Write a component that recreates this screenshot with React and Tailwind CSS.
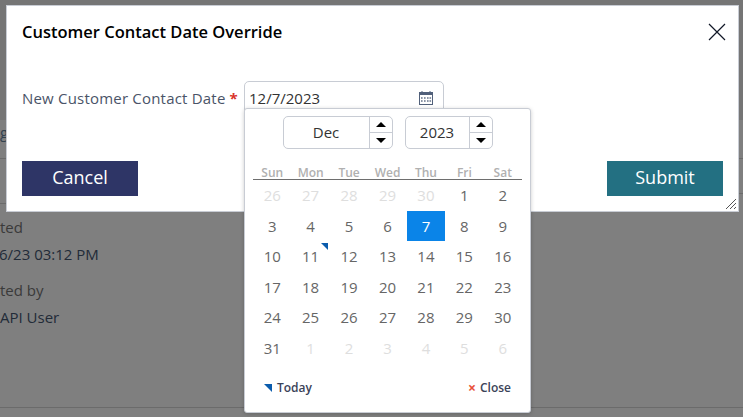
import React from 'react';

const weekDays = ['Sun', 'Mon', 'Tue', 'Wed', 'Thu', 'Fri', 'Sat'];

const dayCells = [
    ...[26, 27, 28, 29, 30].map(n => ({ n, tone: 'out' })),
    ...Array.from({ length: 31 }, (_, i) => ({ n: i + 1, tone: 'in' })),
    ...[1, 2, 3, 4, 5, 6].map(n => ({ n, tone: 'out' })),
];

const Stepper = () => (
    <div className="flex flex-col w-[23px] border-l border-[#c8ccd4]">
        <div className="flex-1 flex items-center justify-center border-b border-[#c8ccd4]">
            <div className="w-0 h-0 border-x-[5px] border-x-transparent border-b-[5px] border-b-black" />
        </div>
        <div className="flex-1 flex items-center justify-center">
            <div className="w-0 h-0 border-x-[5px] border-x-transparent border-t-[5px] border-t-black" />
        </div>
    </div>
);

const CalendarIcon = () => (
    <svg width="16" height="16" viewBox="0 0 16 16" fill="none">
        <rect x="1.5" y="2.5" width="13" height="12" stroke="#51607a" />
        <rect x="1" y="2" width="14" height="3" fill="#51607a" />
        <rect x="3.5" y="1" width="1" height="2" fill="#51607a" />
        <rect x="11.5" y="1" width="1" height="2" fill="#51607a" />
        {[3, 6, 9, 11.5].map(x => <rect key={x} x={x} y="7" width="1.6" height="2" fill="#8b95a6" />)}
        {[3, 6, 9, 11.5].map(x => <rect key={x} x={x} y="10" width="1.6" height="2" fill="#8b95a6" />)}
    </svg>
);

const App = () => {
    return (
        <div className="relative w-[743px] h-[417px] overflow-hidden bg-[#7f7f7f] font-['Open_Sans',sans-serif]">
            {/* Page behind the overlay */}
            <div className="h-[120px] bg-[#757575]" />
            <div className="h-[39px] border-b border-[#6b6b6b] pt-[2px] text-[15px] leading-[20px] text-[#33424f]">g</div>
            <div className="pt-[58px] text-[15px] text-[#3a3a3a]">
                <div className="leading-[20px]">ted</div>
                <div className="leading-[20px] mt-[7px] -ml-[1px] text-[#222b38]">6/23 03:12 PM</div>
                <div className="leading-[20px] mt-[16px]">ted by</div>
                <div className="leading-[20px] mt-[7px] text-[#222b38]">API User</div>
            </div>
            <div className="absolute left-0 w-[6px] top-[203px] h-px bg-[#6b6b6b]" />
            <div className="absolute right-0 w-[4px] top-[193px] h-px bg-[#6b6b6b]" />
            <div className="absolute left-0 right-0 top-[407px] h-px bg-[#6b6b6b]" />

            {/* Modal */}
            <div className="absolute left-[6px] top-[5px] w-[733px] h-[207px] bg-white border border-[#c8ccd4]">
                <div className="flex items-start justify-between pl-[15px] pr-[11px] pt-[14px] h-[62px]">
                    <h1 className="text-[16.5px] leading-[24px] font-semibold text-black">Customer Contact Date Override</h1>
                    <svg width="20" height="20" viewBox="0 0 20 20" className="mt-[2px]">
                        <path d="M2 2 L18 18 M18 2 L2 18" stroke="#111827" strokeWidth="1.2" />
                    </svg>
                </div>
                <div className="flex pl-[15px] h-[93px]">
                    <label className="text-[15px] leading-[60px] tracking-[0.2px] text-[#4a5468] whitespace-nowrap">
                        New Customer Contact Date <span className="text-[#d9342b] font-bold">*</span>
                    </label>
                    <div className="absolute left-[237px] top-[75px] w-[200px] h-[40px] rounded-[5px] border border-[#c8ccd4] flex items-start justify-between pl-[4px] pr-[9px] pt-[4px]">
                        <span className="text-[15px] leading-[24px] text-[#333]">12/7/2023</span>
                        <span className="mt-[4px]"><CalendarIcon /></span>
                    </div>
                </div>
                <div className="flex justify-between pl-[15px] pr-[15px]">
                    <button className="w-[116px] h-[35px] pb-[2px] bg-[#2e3566] text-white text-[18px]">Cancel</button>
                    <button className="w-[116px] h-[35px] pb-[2px] bg-[#237082] text-white text-[18px]">Submit</button>
                </div>
                <svg width="12" height="12" viewBox="0 0 12 12" className="absolute right-[1px] bottom-[1px]">
                    <path d="M1 11 L11 1 M5 11 L11 5 M9 11 L11 9" stroke="#555" strokeWidth="1" />
                </svg>
            </div>

            {/* Date picker popup */}
            <div className="absolute left-[244px] top-[108px] w-[287px] h-[305px] bg-white border border-[#c8ccd4] rounded-[3px] shadow-[0_1px_4px_rgba(0,0,0,0.2)]">
                <div className="flex justify-center gap-[12px] pt-[7px]">
                    <div className="flex w-[110px] h-[33px] rounded-[5px] border border-[#c8ccd4]">
                        <div className="flex-1 text-center text-[15px] leading-[31px] text-[#333]">Dec</div>
                        <Stepper />
                    </div>
                    <div className="flex w-[88px] h-[33px] rounded-[5px] border border-[#c8ccd4]">
                        <div className="flex-1 text-center text-[15px] leading-[31px] text-[#333]">2023</div>
                        <Stepper />
                    </div>
                </div>
                <div className="mx-[8px] mt-[16px] w-[269px] grid grid-cols-7 border-b border-[#6e6e6e] h-[15px]">
                    {weekDays.map(d => (
                        <div key={d} className="text-center text-[12px] leading-[15px] font-semibold text-[#b0b0b0]">{d}</div>
                    ))}
                </div>
                <div className="mx-[8px] w-[269px] grid grid-cols-7 auto-rows-[30.6px]">
                    {dayCells.map((c, i) => {
                        const selected = c.tone === 'in' && c.n === 7;
                        const marked = c.tone === 'in' && c.n === 11;
                        return (
                            <div
                                key={i}
                                className={`relative text-center text-[15px] leading-[30px] ${selected ? 'bg-[#0a84e8] text-white' : c.tone === 'out' ? 'text-[#dedede]' : 'text-[#666]'}`}
                            >
                                {c.n}
                                {marked && (
                                    <div className="absolute right-[2px] top-[2px] w-0 h-0 border-t-[7px] border-t-[#0b5cad] border-l-[7px] border-l-transparent" />
                                )}
                            </div>
                        );
                    })}
                </div>
                <div className="flex justify-between items-center pl-[19px] pr-[19px] mt-[15px] text-[12px] font-semibold text-[#3b4358]">
                    <span className="flex items-center gap-[5px]">
                        <span className="w-0 h-0 border-t-[8px] border-t-[#0b5cad] border-l-[8px] border-l-transparent" />
                        Today
                    </span>
                    <span className="flex items-center gap-[4px]">
                        <span className="text-[#e8503a] text-[14px] font-bold leading-none">×</span>
                        Close
                    </span>
                </div>
            </div>
        </div>
    );
};

export default App;
